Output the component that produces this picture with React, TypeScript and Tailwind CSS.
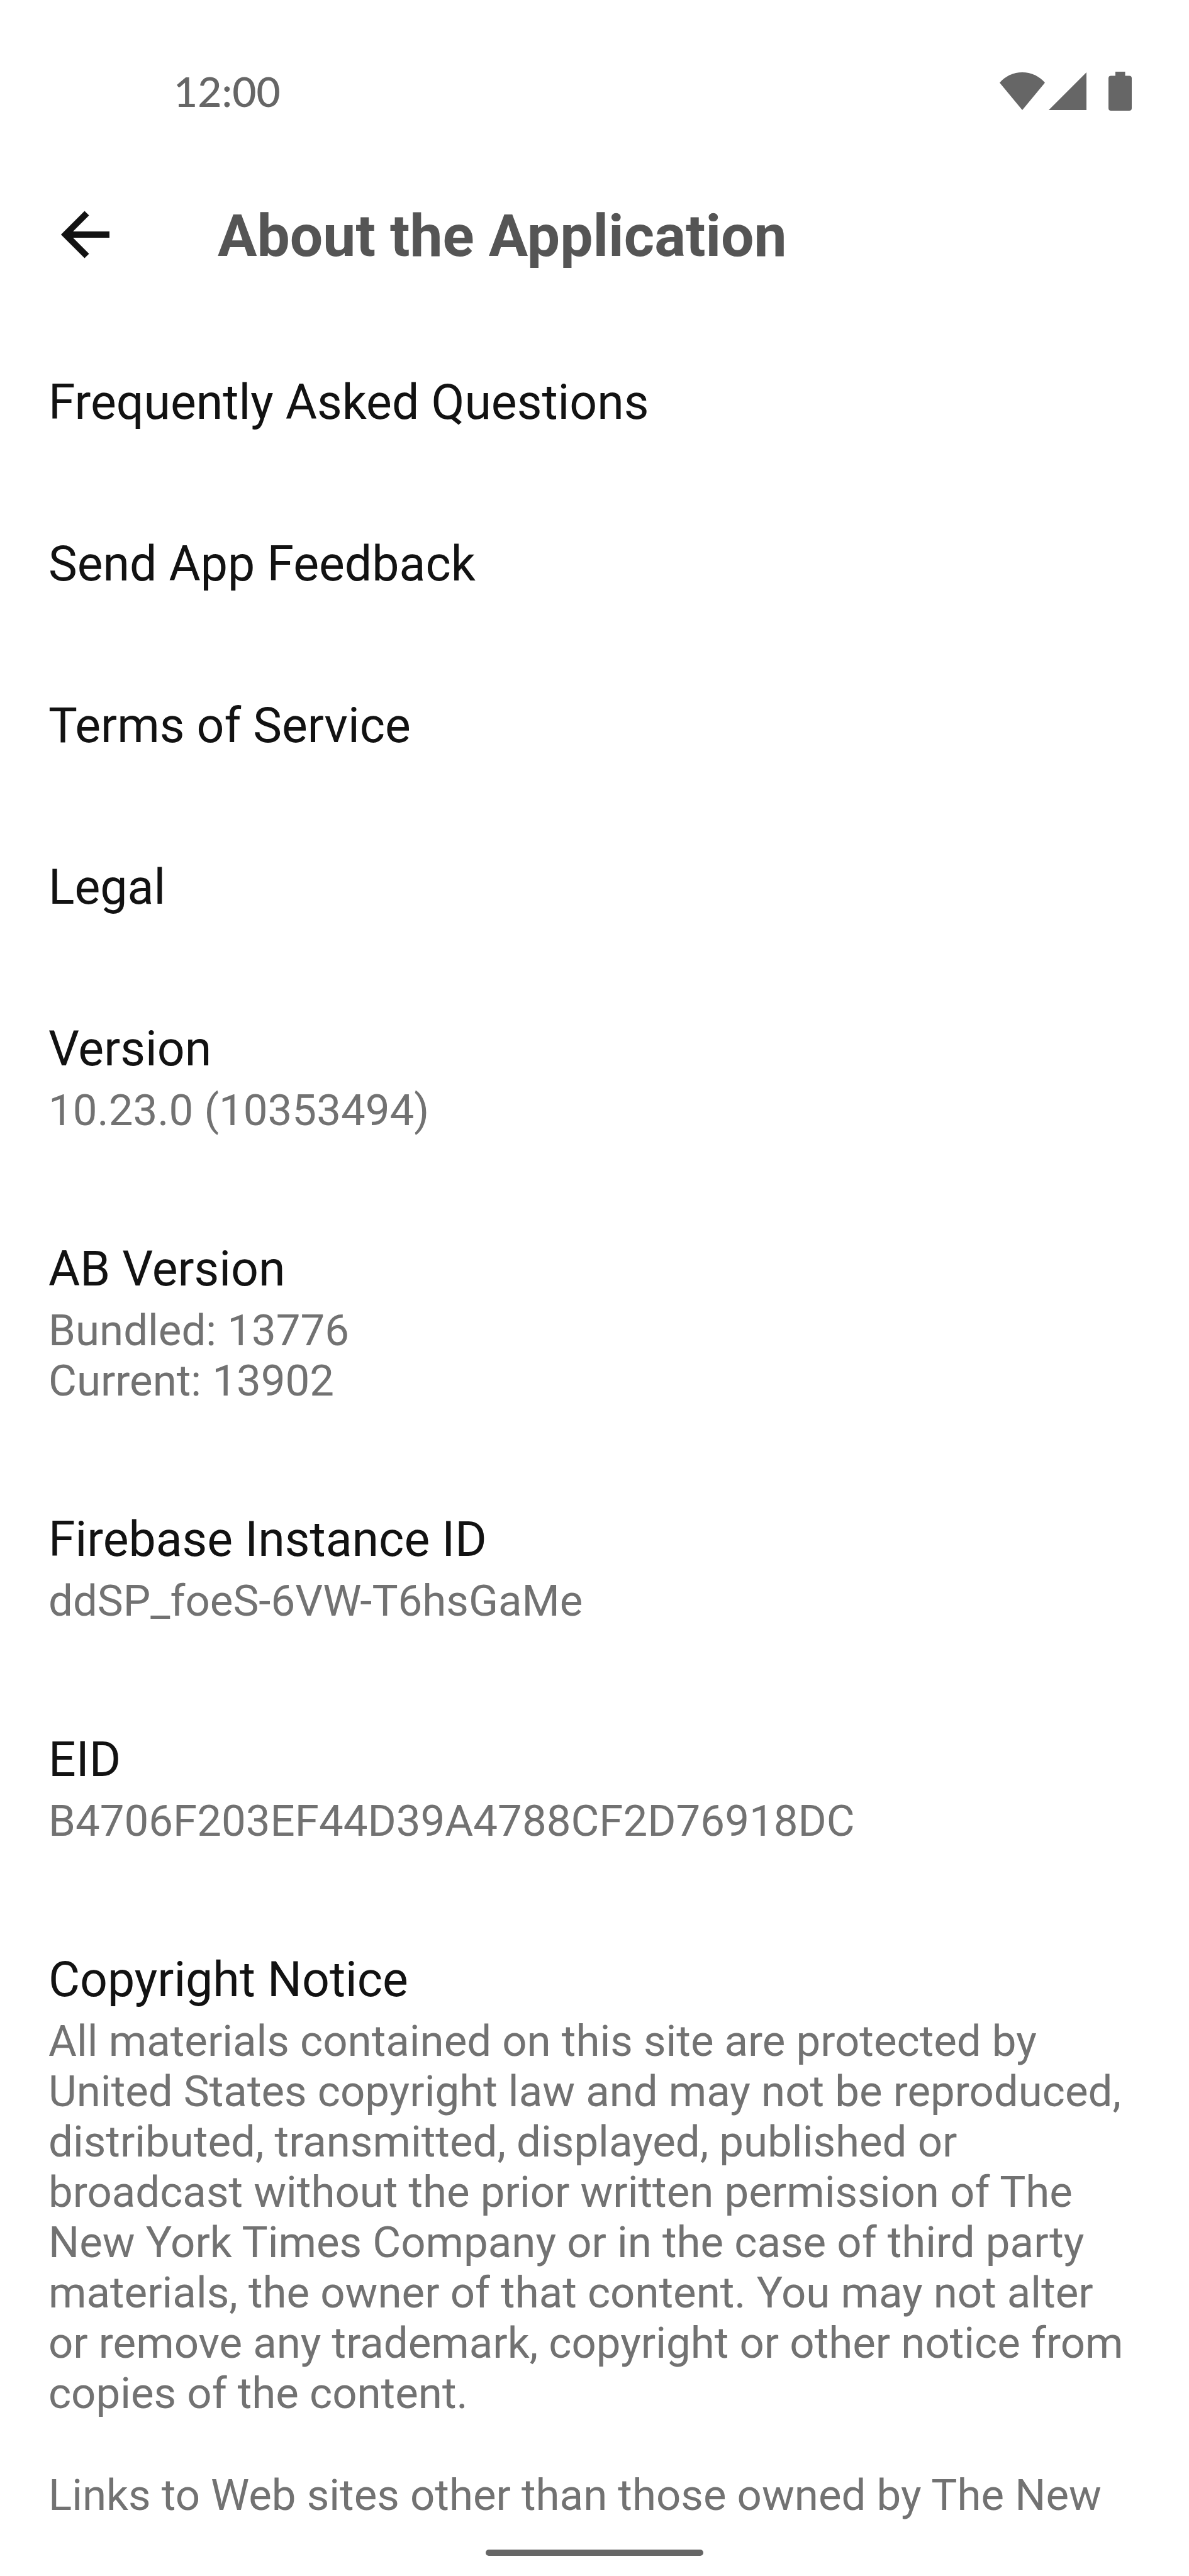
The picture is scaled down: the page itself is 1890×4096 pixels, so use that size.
import { Fragment } from 'react'

type Item = { title: string, summary: string[] }

const links = ['Frequently Asked Questions', 'Send App Feedback', 'Terms of Service', 'Legal']

const details: Item[] = [
  { title: 'Version', summary: ['10.23.0 (10353494)'] },
  { title: 'AB Version', summary: ['Bundled: 13776', 'Current: 13902'] },
  { title: 'Firebase Instance ID', summary: ['ddSP_foeS-6VW-T6hsGaMe'] },
  { title: 'EID', summary: ['B4706F203EF44D39A4788CF2D76918DC'] },
]

function StatusBar() {
  return (
    <div className="flex items-center justify-between pt-[109px] pb-20 pl-[276px] pr-[91px] text-[#666666]">
      <span className="font-[Lato,sans-serif] text-[66px] leading-[72px] font-medium">12:00</span>
      <div className="flex items-center">
        <svg className="w-[72px] h-[60px]" viewBox="0 0 72 60" fill="currentColor" aria-hidden="true">
          <path d="M0 16.5C9 6 22 0 36 0s27 6 36 16.5L36 60z" />
        </svg>
        <svg className="ml-1.5 w-[60px] h-[60px]" viewBox="0 0 60 60" fill="currentColor" aria-hidden="true">
          <path d="M60 0v60H0z" />
        </svg>
        <svg className="ml-[35px] w-[37px] h-[62px]" viewBox="0 0 37 62" fill="currentColor" aria-hidden="true">
          <path d="M11 0h15.500v6.500H33a4 4 0 0 1 4 4V58a4 4 0 0 1-4 4H4a4 4 0 0 1-4-4V10.500a4 4 0 0 1 4-4h7z" />
        </svg>
      </div>
    </div>
  )
}

function Header() {
  return (
    <header className="flex items-center h-[226px] pl-20">
      <button type="button" aria-label="Back" className="p-4">
        <svg className="w-[78px] h-[78px]" viewBox="0 0 78 78" fill="none" stroke="#121212" strokeWidth="10" aria-hidden="true">
          <path d="M42 4L8 38l34 34M8 38h70" />
        </svg>
      </button>
      <h1 className="pl-39 pt-1 text-[93px] leading-[110px] font-bold text-[#555555]">About the Application</h1>
    </header>
  )
}

export default function App() {
  return (
    <div className="relative min-h-screen bg-white font-[Roboto,sans-serif]">
      <StatusBar />
      <Header />

      <main className="px-[77px] pt-[25px]">
        <nav>
          {links.map((label) => (
            <a key={label} href="#" className="block py-[82px] text-[77px] leading-[93px] text-[#121212]">
              {label}
            </a>
          ))}
        </nav>

        {details.map((item) => (
          <section key={item.title} className="pt-[82px] pb-[84px]">
            <h2 className="text-[77px] leading-[93px] text-[#121212]">{item.title}</h2>
            <p className="pt-[11px] text-[69px] leading-[80px] text-[#727272]">
              {item.summary.map((line, i) => (
                <Fragment key={line}>
                  {i > 0 && <br />}
                  {line}
                </Fragment>
              ))}
            </p>
          </section>
        ))}

        <section className="pt-[82px]">
          <h2 className="text-[77px] leading-[93px] text-[#121212]">Copyright Notice</h2>
          <div className="flex flex-col gap-[82px] pt-[11px] text-[69px] leading-[80px] text-[#727272]">
            <p>
              All materials contained on this site are protected by United States copyright law and may not be
              reproduced, distributed, transmitted, displayed, published or broadcast without the prior written
              permission of The New York Times Company or in the case of third party materials, the owner of that
              content. You may not alter or remove any trademark, copyright or other notice from copies of the content.
            </p>
            <p>Links to Web sites other than those owned by The New</p>
          </div>
        </section>
      </main>

      {/* Gesture bar */}
      <div className="absolute bottom-8 left-1/2 h-2.5 w-[346px] -translate-x-1/2 rounded-full bg-[#666666]" />
    </div>
  )
}
